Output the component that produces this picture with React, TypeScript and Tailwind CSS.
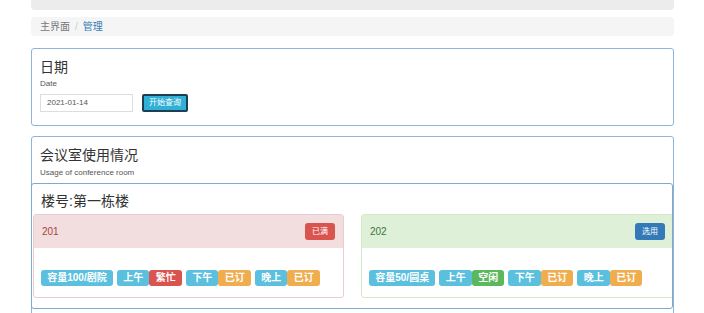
type Slot = {label: string; status: string; tone: 'danger' | 'warning' | 'success'}

type Room = {
  id: string
  capacity: string
  state: 'full' | 'free'
  slots: Slot[]
}

const rooms: Room[] = [
  {
    id: '201',
    capacity: '容量100/剧院',
    state: 'full',
    slots: [
      {label: '上午', status: '繁忙', tone: 'danger'},
      {label: '下午', status: '已订', tone: 'warning'},
      {label: '晚上', status: '已订', tone: 'warning'},
    ],
  },
  {
    id: '202',
    capacity: '容量50/圆桌',
    state: 'free',
    slots: [
      {label: '上午', status: '空闲', tone: 'success'},
      {label: '下午', status: '已订', tone: 'warning'},
      {label: '晚上', status: '已订', tone: 'warning'},
    ],
  },
]

const toneBg: Record<Slot['tone'], string> = {
  danger: 'bg-[#d9534f]',
  warning: 'bg-[#f0ad4e]',
  success: 'bg-[#5cb85c]',
}

function Label({text, className}: {text: string; className: string}) {
  return (
    <span
      className={`inline-flex h-[16px] items-center rounded-[3px] px-[6.25px] text-[10px] font-bold leading-none text-white ${className}`}
    >
      {text}
    </span>
  )
}

function RoomCard({room}: {room: Room}) {
  const full = room.state === 'full'
  return (
    <div
      className={`shrink-0 rounded-[3px] border bg-white ${
        full ? 'w-[311px] border-[#ebccd1]' : 'w-[313px] border-[#d6e9c6]'
      }`}
    >
      <div
        className={`flex h-[33px] items-center justify-between px-[8px] ${
          full ? 'bg-[#f2dede] text-[#a94442]' : 'bg-[#dff0d8] text-[#3c763d]'
        }`}
      >
        <span className="text-[10px]">{room.id}</span>
        <button
          className={`flex h-[17px] w-[30px] items-center justify-center rounded-[3px] text-[8px] text-white ${
            full ? 'bg-[#d9534f]' : 'bg-[#337ab7]'
          }`}
        >
          {full ? '已满' : '选用'}
        </button>
      </div>
      <div className="flex items-center gap-[4px] px-[7px] pt-[22px] pb-[11px]">
        <Label text={room.capacity} className="bg-[#5bc0de]" />
        {room.slots.map((s) => (
          <span key={s.label} className="flex">
            <Label text={s.label} className="bg-[#5bc0de]" />
            <Label text={s.status} className={toneBg[s.tone]} />
          </span>
        ))}
      </div>
    </div>
  )
}

export default function App() {
  return (
    <div
      className="h-[313px] w-[704px] overflow-hidden bg-white text-[#333]"
      style={{fontFamily: '"Liberation Sans", "Noto Sans CJK SC", sans-serif'}}
    >
      <div className="ml-[31px] w-[643px]">
        <div className="h-[10px] rounded-b-[4px] bg-[#ececec]" />

        <div className="mt-[7px] flex h-[19px] items-center rounded-[4px] bg-[#f5f5f5] px-[9px] text-[10px]">
          <span className="text-[#777]">主界面</span>
          <span className="px-[5px] text-[#ccc]">/</span>
          <span className="text-[#337ab7]">管理</span>
        </div>

        <div className="mt-[12px] rounded-[3px] border border-[#8fb6d9] px-[8px] pt-[10px] pb-[13px]">
          <h3 className="text-[14px] leading-[16px]">日期</h3>
          <p className="mt-[4px] text-[8px] leading-[10px] text-[#555]">Date</p>
          <div className="mt-[5px] flex items-center gap-[9px]">
            <div className="flex h-[18px] w-[93px] items-center border border-[#ddd] px-[6px] text-[8px] text-[#555]">
              2021-01-14
            </div>
            <button className="flex h-[18px] w-[46px] items-center justify-center rounded-[2px] border-2 border-[#1d3f55] bg-[#31b0d5] text-[8px] text-white">
              开始查询
            </button>
          </div>
        </div>

        <div className="mt-[10px] rounded-[3px] border border-[#8fb6d9] pt-[10px] pb-[40px]">
          <div className="px-[8px]">
            <h3 className="text-[14px] leading-[16px]">会议室使用情况</h3>
            <p className="mt-[5px] text-[8px] leading-[10px] text-[#555]">Usage of conference room</p>
          </div>

          <div className="ml-[-1px] mt-[5px] overflow-hidden rounded-[3px] border border-[#7fa9d1] pt-[9px] pb-[10px]">
            <h3 className="px-[9px] text-[14px] leading-[16px]">楼号:第一栋楼</h3>
            <div className="mt-[5px] flex gap-[17px] pl-[1px]">
              {rooms.map((r) => (
                <RoomCard key={r.id} room={r} />
              ))}
            </div>
          </div>
        </div>
      </div>
    </div>
  )
}
